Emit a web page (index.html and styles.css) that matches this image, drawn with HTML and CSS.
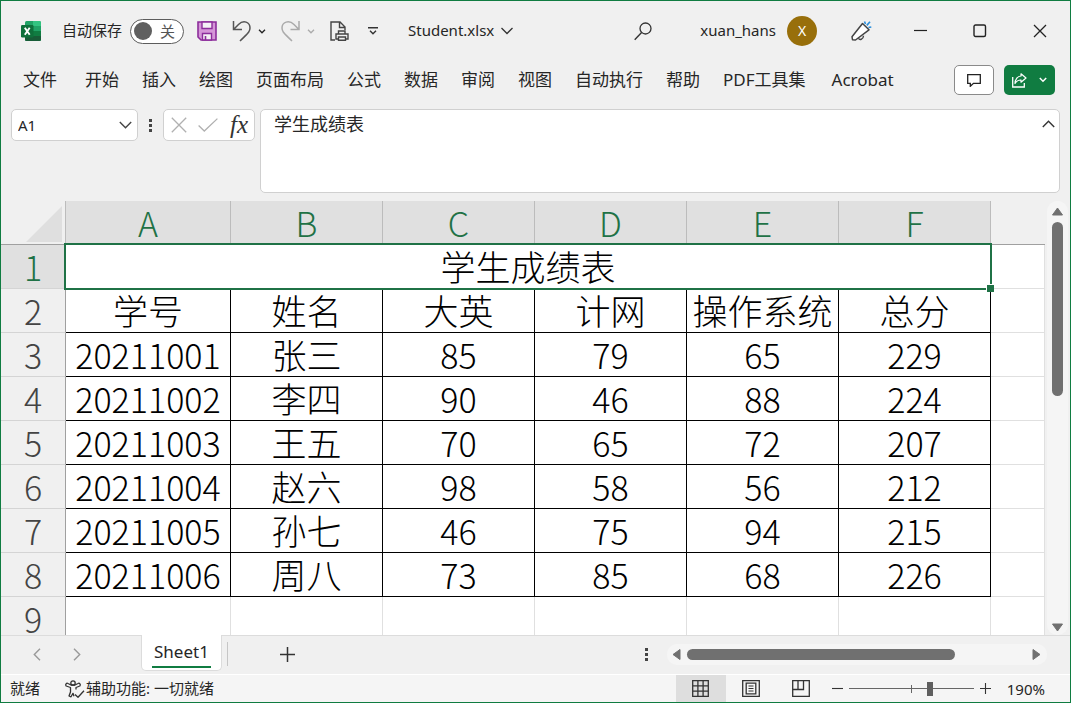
FILE: index.html
```
<!DOCTYPE html>
<html lang="zh-CN">
<head>
<meta charset="utf-8">
<meta name="viewport" content="width=device-width, initial-scale=1">
<title>Student.xlsx</title>
<link rel="stylesheet" href="styles.css">
</head>
<body>
<div class="window">
  <header class="titlebar">
    <svg class="logo" width="20" height="20" viewBox="0 0 20 20" aria-hidden="true">
      <rect x="4" y="0" width="16" height="20" rx="1.5" fill="#21a366"/>
      <path d="M12 0h6.5A1.5 1.5 0 0 1 20 1.500V5h-8z" fill="#33c481"/>
      <path d="M4 5h8v5H4z" fill="#107c41"/>
      <path d="M4 10h8v5H4z" fill="#185c37"/>
      <path d="M12 10h8v5h-8z" fill="#107c41"/>
      <path d="M4 15h16v3.500a1.500 1.500 0 0 1-1.500 1.500h-13A1.500 1.500 0 0 1 4 18.500z" fill="#185c37"/>
      <rect x="0" y="4" width="12.500" height="12.500" rx="1.200" fill="#0f703b"/>
      <path d="M3.800 6.800l4.900 7M8.700 6.800l-4.900 7" stroke="#fff" stroke-width="1.900" fill="none"/>
    </svg>
    <label class="autosave"><span class="raised">自动保存</span>
      <span class="toggle"><input type="checkbox" class="toggle-input"><span class="knob"></span><span class="toggle-text">关</span></span>
    </label>
    <div class="quick">
      <button class="tool" aria-label="保存"><svg width="20" height="20" viewBox="0 0 20 20"><path d="M1 1h18v18H4l-3-3z" fill="#d596d8" stroke="#8c2d9b" stroke-width="1.600"/><path d="M5 1h10v6.500H5z" fill="#f4f0f5" stroke="#8c2d9b" stroke-width="1.400"/><path d="M5.500 19v-6.500h9V19z" fill="#f4f0f5" stroke="#8c2d9b" stroke-width="1.400"/><path d="M8.500 15v4" stroke="#8c2d9b" stroke-width="1.600"/></svg></button>
      <div class="split">
        <button class="tool" aria-label="撤消"><svg width="19" height="22" viewBox="0 0 19 22"><path d="M1.500 1v8.500H10M1.800 9.200L6.500 4.500C11.500-.5 18 2 18 8c0 4-2.500 5.500-10 13" fill="none" stroke="#555" stroke-width="1.500"/></svg></button>
        <button class="tool" aria-label="撤消选项"><svg width="8" height="5" viewBox="0 0 8 5"><path d="M1 .8l3 3 3-3" fill="none" stroke="#222" stroke-width="1.300"/></svg></button>
      </div>
      <div class="split">
        <button class="tool" aria-label="恢复" disabled><svg width="19" height="22" viewBox="0 0 19 22"><path d="M18 1v8.500H9.500M17.700 9.200L13 4.500C8-.5 1 2 1 8c0 4 2.500 5.500 10 13" fill="none" stroke="#aaa" stroke-width="1.500"/></svg></button>
        <button class="tool" aria-label="恢复选项" disabled><svg width="8" height="5" viewBox="0 0 8 5"><path d="M1 .8l3 3 3-3" fill="none" stroke="#aaa" stroke-width="1.300"/></svg></button>
      </div>
      <button class="tool" aria-label="打印预览"><svg width="19" height="20" viewBox="0 0 19 20"><path d="M5 19H1V1h9l5 5v3M9.500 1v5.500H15" fill="none" stroke="#444" stroke-width="1.400"/><path d="M8.500 13v-3h6.500v3M8 18H6v-5h12v5h-2M8.500 16h7v3.300h-7z" fill="#f0f0f0" stroke="#444" stroke-width="1.400"/></svg></button>
      <button class="tool customize" aria-label="自定义快速访问工具栏"><svg width="10" height="8" viewBox="0 0 10 8"><path d="M0 .8h10M2 3.800l3 3 3-3" fill="none" stroke="#333" stroke-width="1.400"/></svg></button>
    </div>
    <button class="file-name"><span class="raised">Student.xlsx</span><svg width="12" height="8" viewBox="0 0 12 8"><path d="M.5 1l5.500 5.500L11.500 1" fill="none" stroke="#333" stroke-width="1.300"/></svg></button>
    <div class="title-end">
      <button class="tool" aria-label="搜索"><svg width="18" height="19" viewBox="0 0 18 19"><circle cx="11.500" cy="6.500" r="5.500" fill="none" stroke="#333" stroke-width="1.300"/><path d="M7.600 10.500L.7 17.800" stroke="#333" stroke-width="1.400"/></svg></button>
      <button class="account"><span class="raised">xuan_hans</span><span class="avatar">X</span></button>
      <button class="tool" aria-label="即将推出"><svg width="21" height="21" viewBox="0 0 21 21"><path d="M11.500 2.500l6.500 6.300L4.500 19l-3-.3-.5-3z" fill="#fff" stroke="#444" stroke-width="1.500" stroke-linejoin="round"/><path d="M7.500 17.200c1 2.200 4.800 1.500 5-2.500" fill="none" stroke="#444" stroke-width="1.400"/><path d="M13.500.500l1 2.500M19 .8l-3.200 3.600M20.300 6l-2.800.5" stroke="#2b8fdc" stroke-width="1.600"/></svg></button>
      <div class="window-controls">
        <button class="tool" aria-label="最小化"><svg width="13" height="14" viewBox="0 0 13 14"><path d="M0 6.500h13" stroke="#222" stroke-width="1.200"/></svg></button>
        <button class="tool" aria-label="最大化"><svg width="14" height="14" viewBox="0 0 14 14"><rect x="1" y="1" width="11.500" height="11.500" rx="1.500" fill="none" stroke="#222" stroke-width="1.400"/></svg></button>
        <button class="tool" aria-label="关闭"><svg width="14" height="14" viewBox="0 0 14 14"><path d="M1 1l12 12M13 1L1 13" stroke="#222" stroke-width="1.300"/></svg></button>
      </div>
    </div>
  </header>

  <div class="ribbon">
    <nav class="tabs" aria-label="功能区">
      <button class="tab tab-file">文件</button><button class="tab">开始</button><button class="tab">插入</button><button class="tab">绘图</button><button class="tab">页面布局</button><button class="tab">公式</button><button class="tab">数据</button><button class="tab">审阅</button><button class="tab">视图</button><button class="tab">自动执行</button><button class="tab">帮助</button><button class="tab">PDF工具集</button><button class="tab tab-last">Acrobat</button>
    </nav>
    <div class="ribbon-actions">
      <button class="comment" aria-label="批注"><svg width="14" height="13" viewBox="0 0 14 13"><path d="M.7.700h12.600v8.600H6.500L3.300 12.300v-3H.7z" fill="none" stroke="#222" stroke-width="1.300"/></svg></button>
      <button class="share" aria-label="共享"><svg width="15" height="15" viewBox="0 0 15 15"><path d="M.7 4v10h11.600v-4" fill="none" stroke="#fff" stroke-width="1.300"/><path d="M9 .8l5 4.200-5 4.200V7C6 6.800 4.500 8 3 10.500 3 6.500 5.500 3.200 9 3z" fill="none" stroke="#fff" stroke-width="1.200" stroke-linejoin="round"/></svg><svg width="8" height="6" viewBox="0 0 8 6"><path d="M.8 1L4 4.200 7.200 1" fill="none" stroke="#fff" stroke-width="1.500"/></svg></button>
    </div>
  </div>

  <div class="formula-bar">
    <div class="name-box">
      <input class="name-input" type="text" value="A1" aria-label="名称框">
      <button class="tool" aria-label="名称列表"><svg width="13" height="8" viewBox="0 0 13 8"><path d="M.8 1l5.700 5.700L12.200 1" fill="none" stroke="#444" stroke-width="1.400"/></svg></button>
    </div>
    <svg class="grip" width="3" height="13" viewBox="0 0 3 13" aria-hidden="true"><path d="M0 0h3v3H0zM0 5h3v3H0zM0 10h3v3H0z" fill="#444"/></svg>
    <div class="formula-tools">
      <button class="tool" aria-label="取消"><svg width="16" height="16" viewBox="0 0 16 16"><path d="M.8.800l14.400 14.400M15.200.800L.8 15.200" stroke="#b0b0b0" stroke-width="1.300"/></svg></button>
      <button class="tool" aria-label="输入"><svg width="20" height="14" viewBox="0 0 20 14"><path d="M.6 7.500l5.700 5.500L19.400.600" fill="none" stroke="#b0b0b0" stroke-width="1.300"/></svg></button>
      <button class="tool fx" aria-label="插入函数">fx</button>
    </div>
    <div class="formula-box">
      <textarea class="formula-input" aria-label="编辑栏">学生成绩表</textarea>
      <button class="tool" aria-label="折叠编辑栏"><svg width="13" height="8" viewBox="0 0 13 8"><path d="M.8 7l5.700-5.700L12.200 7" fill="none" stroke="#333" stroke-width="1.400"/></svg></button>
    </div>
  </div>

  <main class="workspace">
    <div class="sheet-view">
      <table class="sheet">
        <colgroup><col class="col-index"><col class="col-first"><col class="col-data"><col class="col-data"><col class="col-data"><col class="col-data"><col class="col-data"><col></colgroup>
        <thead><tr><th class="corner"><svg width="36" height="36" viewBox="0 0 36 36" aria-hidden="true"><path d="M36 0v36H0z" fill="#dfdfdf"/></svg></th><th>A</th><th>B</th><th>C</th><th>D</th><th>E</th><th>F</th><th class="blank-head"></th></tr></thead>
        <tbody>
          <tr><th class="active">1</th><td class="merged" colspan="6">学生成绩表<span class="selection"></span></td><td class="empty"></td></tr>
          <tr class="labels"><th>2</th><td>学号</td><td>姓名</td><td>大英</td><td>计网</td><td>操作系统</td><td>总分</td><td class="empty"></td></tr>
          <tr><th>3</th><td>20211001</td><td class="han">张三</td><td>85</td><td>79</td><td>65</td><td>229</td><td class="empty"></td></tr>
          <tr><th>4</th><td>20211002</td><td class="han">李四</td><td>90</td><td>46</td><td>88</td><td>224</td><td class="empty"></td></tr>
          <tr><th>5</th><td>20211003</td><td class="han">王五</td><td>70</td><td>65</td><td>72</td><td>207</td><td class="empty"></td></tr>
          <tr><th>6</th><td>20211004</td><td class="han">赵六</td><td>98</td><td>58</td><td>56</td><td>212</td><td class="empty"></td></tr>
          <tr><th>7</th><td>20211005</td><td class="han">孙七</td><td>46</td><td>75</td><td>94</td><td>215</td><td class="empty"></td></tr>
          <tr><th>8</th><td>20211006</td><td class="han">周八</td><td>73</td><td>85</td><td>68</td><td>226</td><td class="empty"></td></tr>
          <tr><th>9</th><td class="empty"></td><td class="empty"></td><td class="empty"></td><td class="empty"></td><td class="empty"></td><td class="empty"></td><td class="empty"></td></tr>
        </tbody>
      </table>
    </div>
    <div class="vscroll">
      <button class="tool" aria-label="向上滚动"><svg width="13" height="9" viewBox="0 0 13 9"><path d="M6.500 1l5 7h-10z" fill="#707070" stroke="#707070" stroke-linejoin="round"/></svg></button>
      <div class="vtrack"><div class="vthumb"></div></div>
      <button class="tool" aria-label="向下滚动"><svg width="13" height="9" viewBox="0 0 13 9"><path d="M6.500 8l5-7h-10z" fill="#707070" stroke="#707070" stroke-linejoin="round"/></svg></button>
    </div>
  </main>

  <div class="sheet-bar">
    <div class="sheet-nav">
      <button class="tool" aria-label="上一工作表"><svg width="8" height="13" viewBox="0 0 8 13"><path d="M7 .8L1.300 6.500 7 12.200" fill="none" stroke="#999" stroke-width="1.400"/></svg></button>
      <button class="tool" aria-label="下一工作表"><svg width="8" height="13" viewBox="0 0 8 13"><path d="M1 .8l5.700 5.700L1 12.200" fill="none" stroke="#999" stroke-width="1.400"/></svg></button>
    </div>
    <button class="sheet-tab"><span>Sheet1</span></button>
    <span class="divider"></span>
    <button class="tool add" aria-label="新工作表"><svg width="15" height="15" viewBox="0 0 15 15"><path d="M0 7.500h15M7.500 0v15" stroke="#333" stroke-width="1.500"/></svg></button>
    <svg class="grip-end" width="3" height="13" viewBox="0 0 3 13" aria-hidden="true"><path d="M0 0h3v3H0zM0 5h3v3H0zM0 10h3v3H0z" fill="#444"/></svg>
    <div class="hscroll">
      <button class="tool" aria-label="向左滚动"><svg width="9" height="13" viewBox="0 0 9 13"><path d="M1 6.500l7-5v10z" fill="#707070" stroke="#707070" stroke-linejoin="round"/></svg></button>
      <div class="htrack"><div class="hthumb"></div></div>
      <button class="tool" aria-label="向右滚动"><svg width="9" height="13" viewBox="0 0 9 13"><path d="M8 6.500l-7-5v10z" fill="#707070" stroke="#707070" stroke-linejoin="round"/></svg></button>
    </div>
  </div>

  <footer class="status">
    <span class="raised">就绪</span>
    <button class="access"><svg width="20" height="18" viewBox="0 0 20 18"><g fill="none" stroke="#333" stroke-width="1.300" stroke-linejoin="round"><circle cx="8" cy="3" r="2.200"/><path d="M9 16.300l-1-3-2 3.500-2-.8 1.500-4V7.500L1.200 6C0 4.500 1.500 2.500 3 3.500l3 1.500h4l3-1.500c1.500-1 3 1 1.800 2.500L11 7.500v2"/><path d="M10 14.500l3 2.800 6-6.500"/></g></svg><span class="raised">辅助功能: 一切就绪</span></button>
    <div class="views">
      <button class="view current" aria-label="普通"><svg width="17" height="17" viewBox="0 0 17 17"><path d="M.7.700h15.600v15.600H.7zM.7 5.900h15.600M.7 11.100h15.600M5.900.700v15.600M11.100.700v15.600" fill="none" stroke="#333" stroke-width="1.300"/></svg></button>
      <button class="view" aria-label="页面布局"><svg width="18" height="17" viewBox="0 0 18 17"><path d="M.7.700h16.600v15.600H.7zM4.200 3.200h9.600v10.600H4.200z" fill="none" stroke="#333" stroke-width="1.300"/><path d="M6.500 6h5M6.500 8.500h5M6.500 11h5" stroke="#333" stroke-width="1.200"/></svg></button>
      <button class="view" aria-label="分页预览"><svg width="18" height="17" viewBox="0 0 18 17"><path d="M.7.700h16.600v15.600H.7zM.7 9.500h10.800V.700M6 .7v8.800" fill="none" stroke="#333" stroke-width="1.300"/></svg></button>
    </div>
    <div class="zoom">
      <button class="tool" aria-label="缩小"><svg width="11" height="11" viewBox="0 0 11 11"><path d="M0 5.500h11" stroke="#333" stroke-width="1.100"/></svg></button>
      <input class="zoom-range" type="range" min="0" max="100" value="66" aria-label="显示比例">
      <button class="tool" aria-label="放大"><svg width="11" height="11" viewBox="0 0 11 11"><path d="M0 5.500h11M5.500 0v11" stroke="#333" stroke-width="1.100"/></svg></button>
      <button class="percent">190%</button>
    </div>
  </footer>
</div>
</body>
</html>
```
FILE: styles.css
```
* {
  box-sizing: border-box;
}

body {
  margin: 0;
  color: #262626;
  background: #f0f0f0;
  font: 15px/20px "Noto Sans", "Noto Sans CJK SC", sans-serif;
}

button,
input,
textarea {
  margin: 0;
  padding: 0;
  border: 0;
  outline: 0;
  color: inherit;
  background: none;
  font: inherit;
}

svg {
  display: block;
  flex: none;
}

.window {
  display: flex;
  flex-direction: column;
  height: 100vh;
  overflow: hidden;
  border: 1px solid #107c41;
}

.tool {
  display: flex;
  flex: none;
  align-items: center;
  justify-content: center;
}

.raised {
  padding-bottom: 2px;
}

/* Title bar */
.titlebar {
  display: flex;
  flex: none;
  align-items: center;
  height: 60px;
  padding: 0 23px 0 20px;
  white-space: nowrap;
}

.autosave {
  display: flex;
  align-items: center;
  gap: 8px;
  margin-left: 21px;
}

.toggle {
  display: flex;
  align-items: center;
  gap: 8px;
  width: 54px;
  height: 25px;
  padding-left: 3px;
  border: 1px solid #5c5c5c;
  border-radius: 13px;
  background: #fff;
}

.toggle-input {
  appearance: none;
  width: 0;
  margin-right: -8px;
}

.knob {
  width: 18px;
  height: 18px;
  border-radius: 50%;
  background: #5f5f5f;
}

.toggle-text {
  padding-bottom: 1px;
  color: #555;
}

.quick {
  display: flex;
  align-items: center;
  gap: 15px;
  margin-left: 13px;
}

.split {
  display: flex;
  align-items: center;
  gap: 7px;
}

.customize {
  margin-left: 4px;
}

.file-name {
  display: flex;
  align-items: center;
  gap: 7px;
  margin-left: 30px;
}

.title-end {
  display: flex;
  align-items: center;
  gap: 34px;
  margin-left: auto;
}

.account {
  display: flex;
  align-items: center;
  gap: 11px;
  margin-left: 14px;
}

.avatar {
  width: 30px;
  border-radius: 50%;
  color: #fff;
  background: #986f0b;
  font-size: 14px;
  line-height: 30px;
}

.window-controls {
  display: flex;
  gap: 46px;
  margin-left: 8px;
}

/* Ribbon tabs */
.ribbon {
  display: flex;
  flex: none;
  justify-content: space-between;
  align-items: center;
  height: 38px;
  padding: 0 15px 0 22px;
}

.tabs {
  display: flex;
  gap: 23px;
}

.tab {
  font-size: 17px;
  line-height: 24px;
  white-space: nowrap;
}

.tab-file {
  margin-right: 5px;
}

.tab-last {
  margin-left: 3px;
}

.ribbon-actions {
  display: flex;
  gap: 10px;
}

.comment,
.share {
  display: flex;
  align-items: center;
  justify-content: center;
  height: 30px;
  border-radius: 5px;
}

.comment {
  width: 40px;
  border: 1px solid #8a8a8a;
  background: #fff;
}

.share {
  gap: 12px;
  width: 51px;
  background: #107c41;
}

/* Formula bar */
.formula-bar {
  display: flex;
  flex: none;
  align-items: flex-start;
  padding: 10px 10px 8px;
}

.name-box,
.formula-tools,
.formula-box {
  display: flex;
  border: 1px solid #d0d0d0;
  border-radius: 5px;
  background: #fff;
}

.name-box,
.formula-tools {
  align-items: center;
  height: 32px;
}

.name-box {
  width: 127px;
  padding: 0 5px 0 6px;
}

.name-input {
  flex: 1;
  min-width: 0;
}

.grip {
  margin: 10px 11px 0;
}

.formula-tools {
  justify-content: space-between;
  width: 92px;
  padding: 0 6px 0 7px;
}

.fx {
  font: italic 25px/28px "Liberation Serif", serif;
  color: #333;
}

.formula-box {
  flex: 1;
  align-items: flex-start;
  height: 84px;
  margin-left: 5px;
  padding: 2px 4px 4px 13px;
}

.formula-box .tool {
  margin-top: 8px;
}

.formula-input {
  flex: 1;
  height: 74px;
  resize: none;
  overflow: hidden;
  font-size: 18px;
  line-height: 24px;
}

/* Grid */
.workspace {
  display: flex;
  flex: 1;
  min-height: 0;
}

.sheet-view {
  flex: 1;
  min-width: 0;
  overflow: hidden;
}

.sheet {
  width: 100%;
  table-layout: fixed;
  border-collapse: separate;
  border-spacing: 0;
  font: 300 34px/43px "Noto Sans CJK SC", sans-serif;
  text-align: center;
  color: #000;
}

.col-index {
  width: 65px;
}

.col-first {
  width: 165px;
}

.col-data {
  width: 152px;
}

.sheet th,
.sheet td {
  height: 44px;
  padding: 0;
  border-right: 1px solid #000;
  border-bottom: 1px solid #000;
  font-weight: 300;
  white-space: nowrap;
}

.sheet thead th {
  border-right-color: #bcbcbc;
  border-bottom-color: #a0a0a0;
  color: #1f7246;
  background: #e0e0e0;
}

.sheet thead .corner,
.sheet thead .blank-head {
  background: #f0f0f0;
}

.sheet thead .blank-head {
  border-right: 0;
}

.corner svg {
  margin: 3px 0 0 25px;
}

.sheet tbody th {
  border-right-color: #a0a0a0;
  border-bottom-color: #d4d4d4;
  color: #444;
  background: #f0f0f0;
}

.sheet tbody .active {
  color: #1f7246;
  background: #e0e0e0;
}

.sheet td {
  background: #fff;
}

.sheet .empty {
  border-color: #e0e0e0;
}

.sheet .merged {
  position: relative;
}

.sheet .merged,
.sheet .han,
.labels td {
  padding-bottom: 2px;
  font-size: 35px;
  line-height: 41px;
}

.selection {
  position: absolute;
  inset: -2px;
  border: 2px solid #1f7246;
}

.selection::after {
  content: "";
  position: absolute;
  right: -4px;
  bottom: -4px;
  width: 7px;
  height: 7px;
  border: solid #fff;
  border-width: 1px 0 0 1px;
  background: #1f7246;
}

.vscroll {
  display: flex;
  flex: none;
  flex-direction: column;
  align-items: center;
  width: 21px;
  margin: 0 2px;
  padding: 6px 0 3px;
  border-radius: 10px;
  background: #f5f5f5;
}

.vtrack {
  flex: 1;
  width: 11px;
  padding: 6px 0;
}

.vthumb {
  height: 44%;
  border-radius: 6px;
  background: #707070;
}

/* Sheet tabs and horizontal scrolling */
.sheet-bar {
  display: flex;
  flex: none;
  align-items: center;
  height: 40px;
  padding-bottom: 2px;
  border-top: 1px solid #dcdcdc;
  border-bottom: 1px solid #fff;
}

.sheet-nav {
  display: flex;
  gap: 32px;
  margin-left: 32px;
}

.sheet-tab {
  align-self: flex-start;
  height: 36px;
  margin: -1px 0 0 60px;
  padding: 0 10px;
  border: 1px solid #dcdcdc;
  border-top: 0;
  border-radius: 0 0 5px 5px;
  background: #fff;
  font-size: 17px;
}

.sheet-tab span {
  display: block;
  padding: 2px;
  border-bottom: 2px solid #107c41;
  line-height: 25px;
}

.divider {
  width: 1px;
  height: 24px;
  margin-left: 5px;
  background: #c6c6c6;
}

.add {
  margin-left: 52px;
}

.grip-end {
  margin-left: auto;
  margin-right: 19px;
}

.hscroll {
  display: flex;
  align-items: center;
  width: 380px;
  height: 21px;
  margin-right: 23px;
  padding: 0 6px 0 5px;
  border-radius: 10px;
  background: #f5f5f5;
}

.htrack {
  flex: 1;
  padding: 0 6px;
}

.hthumb {
  width: 79%;
  height: 11px;
  border-radius: 6px;
  background: #707070;
}

/* Status bar */
.status {
  display: flex;
  flex: none;
  align-items: center;
  height: 27px;
  padding: 0 25px 0 9px;
  background: #f5f5f5;
  white-space: nowrap;
}

.access {
  display: flex;
  align-items: center;
  gap: 1px;
  margin-left: 25px;
}

.views {
  display: flex;
  align-self: stretch;
  margin-left: auto;
}

.view {
  display: flex;
  align-items: center;
  justify-content: center;
  width: 50px;
}

.current {
  background: #dedede;
}

.zoom {
  display: flex;
  align-items: center;
  gap: 6px;
  margin-left: 6px;
}

.zoom-range {
  appearance: none;
  width: 125px;
  height: 14px;
  background:
    linear-gradient(#666, #666) center / 1px 8px no-repeat,
    linear-gradient(#666, #666) center / 100% 1px no-repeat;
}

.zoom-range::-webkit-slider-thumb {
  appearance: none;
  width: 6px;
  height: 14px;
  background: #5f5f5f;
}

.percent {
  margin-left: 10px;
}
```
